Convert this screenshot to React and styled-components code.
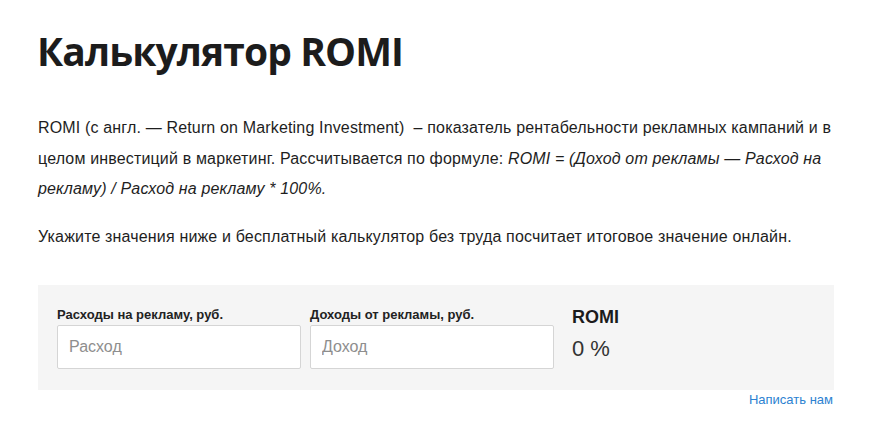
import React, { useState } from 'react';
import styled, { createGlobalStyle } from 'styled-components';

const GlobalStyle = createGlobalStyle`
  html, body {
    margin: 0;
    padding: 0;
    background: #fff;
  }
  body {
    font-family: "Liberation Sans", Arial, sans-serif;
    color: #222;
  }
`;

const Page = styled.div`
  width: 796px;
  padding: 0 0 0 38px;
`;

const Title = styled.h1`
  margin: 0 0 0 -1px;
  padding-top: 27px;
  font-family: "Open Sans", "Liberation Sans", sans-serif;
  font-weight: 700;
  font-size: 39px;
  line-height: 48px;
  color: #1c1c1c;
  letter-spacing: -0.9px;
`;

const Text = styled.p`
  margin: ${p => p.$top || 0}px 0 0;
  font-size: 16px;
  line-height: 30.5px;
  letter-spacing: 0.16px;
  color: #1e1e1e;

  em {
    font-style: italic;
  }
`;

const Panel = styled.div`
  margin-top: 33px;
  background: #f5f5f5;
  padding: 22px 19px 21px;
  display: flex;
  gap: 9px;
`;

const Field = styled.label`
  display: flex;
  flex-direction: column;
  width: 244px;
`;

const Label = styled.span`
  font-size: 13px;
  font-weight: 700;
  line-height: 16px;
  color: #222;
  margin-bottom: 2px;
`;

const Input = styled.input`
  box-sizing: border-box;
  height: 44px;
  width: 100%;
  border: 1px solid #d5d5d5;
  border-radius: 2px;
  background: #fff;
  padding: 0 11px;
  font-family: "Liberation Sans", Arial, sans-serif;
  font-size: 16px;
  color: #333;
  outline: none;

  &::placeholder {
    color: #8e8e8e;
  }
`;

const Result = styled.div`
  margin-left: 9px;
  display: flex;
  flex-direction: column;
`;

const ResultTitle = styled.div`
  font-size: 18px;
  font-weight: 700;
  line-height: 20px;
  color: #1c1c1c;
`;

const ResultValue = styled.div`
  margin-top: 9px;
  font-size: 22px;
  line-height: 26px;
  color: #333;
`;

const Footer = styled.div`
  display: flex;
  justify-content: flex-end;
  padding-top: 2px;
  padding-right: 1px;
`;

const Link = styled.a`
  font-size: 13px;
  line-height: 16px;
  color: #2c82d1;
  text-decoration: none;
`;

export default function App() {
  const [cost, setCost] = useState('');
  const [income, setIncome] = useState('');
  const c = parseFloat(cost);
  const i = parseFloat(income);
  const romi = c > 0 && !isNaN(i) ? Math.round(((i - c) / c) * 100) : 0;

  return (
    <Page>
      <GlobalStyle />
      <Title>Калькулятор ROMI</Title>
      <Text $top={38}>
        ROMI (с англ. — Return on Marketing Investment)&nbsp; – показатель рентабельности рекламных кампаний и в
        целом инвестиций в маркетинг. Рассчитывается по формуле:{' '}
        <em>ROMI = (Доход от рекламы — Расход на рекламу) / Расход на рекламу * 100%.</em>
      </Text>
      <Text $top={17}>
        Укажите значения ниже и бесплатный калькулятор без труда посчитает итоговое значение онлайн.
      </Text>
      <Panel>
        <Field>
          <Label>Расходы на рекламу, руб.</Label>
          <Input placeholder="Расход" value={cost} onChange={e => setCost(e.target.value)} />
        </Field>
        <Field>
          <Label>Доходы от рекламы, руб.</Label>
          <Input placeholder="Доход" value={income} onChange={e => setIncome(e.target.value)} />
        </Field>
        <Result>
          <ResultTitle>ROMI</ResultTitle>
          <ResultValue>{romi} %</ResultValue>
        </Result>
      </Panel>
      <Footer>
        <Link href="#">Написать нам</Link>
      </Footer>
    </Page>
  );
}
